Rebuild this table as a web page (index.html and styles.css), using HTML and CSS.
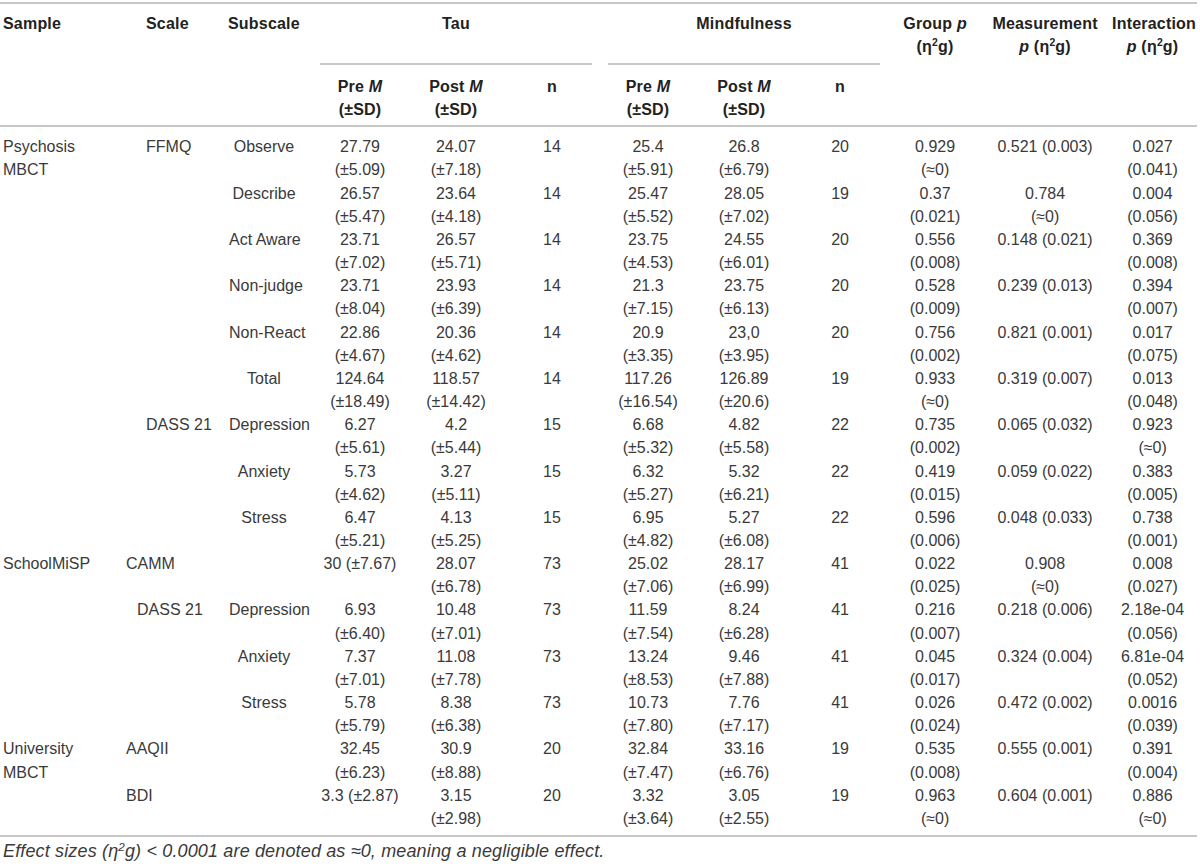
FILE: index.html
```html
<!DOCTYPE html>
<html>
<head>
<meta charset="utf-8">
<link rel="stylesheet" href="styles.css">
</head>
<body>
<table class="tbl">
<colgroup>
<col style="width:123px"><col style="width:102px"><col style="width:87px">
<col style="width:96px"><col style="width:96px"><col style="width:96px">
<col style="width:96px"><col style="width:96px"><col style="width:96px">
<col style="width:94px"><col style="width:126px"><col style="width:89px">
</colgroup>
<thead>
<tr class="h1">
<th rowspan="2" class="left">Sample</th>
<th rowspan="2" class="left ind">Scale</th>
<th rowspan="2" class="left">Subscale</th>
<th colspan="3" class="grp"><div class="grp-label">Tau</div></th>
<th colspan="3" class="grp"><div class="grp-label">Mindfulness</div></th>
<th rowspan="2">Group <i>p</i><br>(η<sup>2</sup>g)</th>
<th rowspan="2">Measurement<br><i>p</i> (η<sup>2</sup>g)</th>
<th rowspan="2">Interaction<br><i>p</i> (η<sup>2</sup>g)</th>
</tr>
<tr class="h2">
<th>Pre <i>M</i><br>(±SD)</th>
<th>Post <i>M</i><br>(±SD)</th>
<th>n</th>
<th>Pre <i>M</i><br>(±SD)</th>
<th>Post <i>M</i><br>(±SD)</th>
<th>n</th>
</tr>
</thead>
<tbody>
<tr class="first">
<td class="left">Psychosis<br>MBCT</td><td class="left ind">FFMQ</td><td class="sub">Observe</td>
<td>27.79<br>(±5.09)</td><td>24.07<br>(±7.18)</td><td>14</td>
<td>25.4<br>(±5.91)</td><td>26.8<br>(±6.79)</td><td>20</td>
<td>0.929<br>(≈0)</td><td>0.521 (0.003)</td><td>0.027<br>(0.041)</td>
</tr>
<tr>
<td></td><td></td><td class="sub">Describe</td>
<td>26.57<br>(±5.47)</td><td>23.64<br>(±4.18)</td><td>14</td>
<td>25.47<br>(±5.52)</td><td>28.05<br>(±7.02)</td><td>19</td>
<td>0.37<br>(0.021)</td><td>0.784<br>(≈0)</td><td>0.004<br>(0.056)</td>
</tr>
<tr>
<td></td><td></td><td class="sub">Act Aware</td>
<td>23.71<br>(±7.02)</td><td>26.57<br>(±5.71)</td><td>14</td>
<td>23.75<br>(±4.53)</td><td>24.55<br>(±6.01)</td><td>20</td>
<td>0.556<br>(0.008)</td><td>0.148 (0.021)</td><td>0.369<br>(0.008)</td>
</tr>
<tr>
<td></td><td></td><td class="sub">Non-judge</td>
<td>23.71<br>(±8.04)</td><td>23.93<br>(±6.39)</td><td>14</td>
<td>21.3<br>(±7.15)</td><td>23.75<br>(±6.13)</td><td>20</td>
<td>0.528<br>(0.009)</td><td>0.239 (0.013)</td><td>0.394<br>(0.007)</td>
</tr>
<tr>
<td></td><td></td><td class="sub">Non-React</td>
<td>22.86<br>(±4.67)</td><td>20.36<br>(±4.62)</td><td>14</td>
<td>20.9<br>(±3.35)</td><td>23,0<br>(±3.95)</td><td>20</td>
<td>0.756<br>(0.002)</td><td>0.821 (0.001)</td><td>0.017<br>(0.075)</td>
</tr>
<tr>
<td></td><td></td><td class="sub">Total</td>
<td>124.64<br>(±18.49)</td><td>118.57<br>(±14.42)</td><td>14</td>
<td>117.26<br>(±16.54)</td><td>126.89<br>(±20.6)</td><td>19</td>
<td>0.933<br>(≈0)</td><td>0.319 (0.007)</td><td>0.013<br>(0.048)</td>
</tr>
<tr>
<td></td><td class="left ind">DASS 21</td><td class="sub">Depression</td>
<td>6.27<br>(±5.61)</td><td>4.2<br>(±5.44)</td><td>15</td>
<td>6.68<br>(±5.32)</td><td>4.82<br>(±5.58)</td><td>22</td>
<td>0.735<br>(0.002)</td><td>0.065 (0.032)</td><td>0.923<br>(≈0)</td>
</tr>
<tr>
<td></td><td></td><td class="sub">Anxiety</td>
<td>5.73<br>(±4.62)</td><td>3.27<br>(±5.11)</td><td>15</td>
<td>6.32<br>(±5.27)</td><td>5.32<br>(±6.21)</td><td>22</td>
<td>0.419<br>(0.015)</td><td>0.059 (0.022)</td><td>0.383<br>(0.005)</td>
</tr>
<tr>
<td></td><td></td><td class="sub">Stress</td>
<td>6.47<br>(±5.21)</td><td>4.13<br>(±5.25)</td><td>15</td>
<td>6.95<br>(±4.82)</td><td>5.27<br>(±6.08)</td><td>22</td>
<td>0.596<br>(0.006)</td><td>0.048 (0.033)</td><td>0.738<br>(0.001)</td>
</tr>
<tr>
<td class="left">SchoolMiSP</td><td class="left">CAMM</td><td class="sub"></td>
<td>30 (±7.67)</td><td>28.07<br>(±6.78)</td><td>73</td>
<td>25.02<br>(±7.06)</td><td>28.17<br>(±6.99)</td><td>41</td>
<td>0.022<br>(0.025)</td><td>0.908<br>(≈0)</td><td>0.008<br>(0.027)</td>
</tr>
<tr>
<td></td><td class="left ind2">DASS 21</td><td class="sub">Depression</td>
<td>6.93<br>(±6.40)</td><td>10.48<br>(±7.01)</td><td>73</td>
<td>11.59<br>(±7.54)</td><td>8.24<br>(±6.28)</td><td>41</td>
<td>0.216<br>(0.007)</td><td>0.218 (0.006)</td><td>2.18e-04<br>(0.056)</td>
</tr>
<tr>
<td></td><td></td><td class="sub">Anxiety</td>
<td>7.37<br>(±7.01)</td><td>11.08<br>(±7.78)</td><td>73</td>
<td>13.24<br>(±8.53)</td><td>9.46<br>(±7.88)</td><td>41</td>
<td>0.045<br>(0.017)</td><td>0.324 (0.004)</td><td>6.81e-04<br>(0.052)</td>
</tr>
<tr>
<td></td><td></td><td class="sub">Stress</td>
<td>5.78<br>(±5.79)</td><td>8.38<br>(±6.38)</td><td>73</td>
<td>10.73<br>(±7.80)</td><td>7.76<br>(±7.17)</td><td>41</td>
<td>0.026<br>(0.024)</td><td>0.472 (0.002)</td><td>0.0016<br>(0.039)</td>
</tr>
<tr>
<td class="left">University<br>MBCT</td><td class="left">AAQII</td><td class="sub"></td>
<td>32.45<br>(±6.23)</td><td>30.9<br>(±8.88)</td><td>20</td>
<td>32.84<br>(±7.47)</td><td>33.16<br>(±6.76)</td><td>19</td>
<td>0.535<br>(0.008)</td><td>0.555 (0.001)</td><td>0.391<br>(0.004)</td>
</tr>
<tr class="last">
<td></td><td class="left">BDI</td><td class="sub"></td>
<td>3.3 (±2.87)</td><td>3.15<br>(±2.98)</td><td>20</td>
<td>3.32<br>(±3.64)</td><td>3.05<br>(±2.55)</td><td>19</td>
<td>0.963<br>(≈0)</td><td>0.604 (0.001)</td><td>0.886<br>(≈0)</td>
</tr>
</tbody>
</table>
<p class="note">Effect sizes (η<sup>2</sup><i>g</i>) &lt; 0.0001 are denoted as ≈0, meaning a negligible effect.</p>
</body>
</html>
```

FILE: styles.css
```css
html, body {
  margin: 0;
  padding: 0;
  background: #ffffff;
}

body {
  font-family: "Liberation Sans", Arial, sans-serif;
  font-size: 16px;
  color: #3a3a3a;
}

.tbl {
  width: 1197px;
  table-layout: fixed;
  border-collapse: separate;
  border-spacing: 0;
  margin-top: 2px;
  border-top: 2px solid #c8c8c8;
}

.tbl th,
.tbl td {
  padding: 0 4px;
  text-align: center;
  vertical-align: top;
  line-height: 23.15px;
  white-space: nowrap;
}

.tbl th {
  font-weight: bold;
  color: #222;
  letter-spacing: 0.2px;
}

.tbl th sup,
.note sup {
  font-size: 0.65em;
  line-height: 0;
  vertical-align: 0.55em;
}

.tbl .left {
  text-align: left;
}

.tbl th.left,
.tbl td.left {
  padding-left: 3px;
}

.tbl th.ind,
.tbl td.ind {
  padding-left: 23px;
}

.tbl td.ind2 {
  padding-left: 14px;
}

.tbl td.sub {
  padding-left: 4px;
  padding-right: 13px;
}

.tbl .h1 th {
  padding-top: 8px;
}

.tbl .h1 th[rowspan] {
  border-bottom: 2px solid #c8c8c8;
}

.tbl .h1 th.grp {
  padding: 0 8px;
}

.grp-label {
  padding-top: 8px;
  box-sizing: border-box;
  border-bottom: 2px solid #c8c8c8;
  height: 61px;
}

.tbl .h2 th {
  padding-top: 10px;
  padding-bottom: 4px;
  border-bottom: 2px solid #c8c8c8;
}

.tbl .first td {
  padding-top: 8px;
}

.tbl .last td {
  padding-bottom: 5px;
  border-bottom: 2px solid #c8c8c8;
}

.note {
  margin: 2px 0 0 3px;
  font-size: 18px;
  font-style: italic;
  letter-spacing: 0.15px;
  line-height: 25px;
  color: #3a3a3a;
}
```
